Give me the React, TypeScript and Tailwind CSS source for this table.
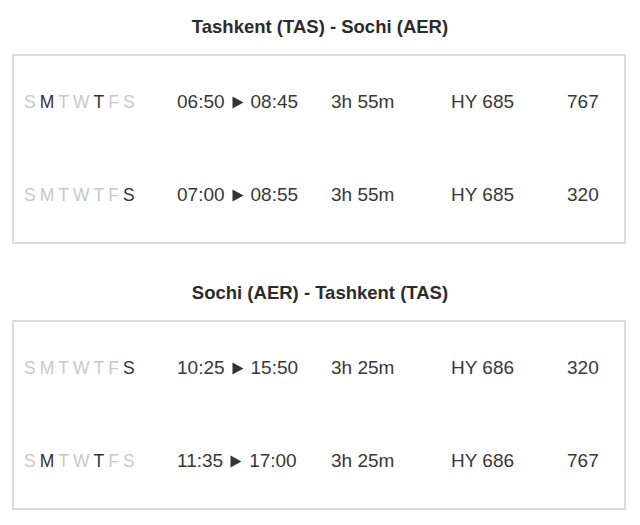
import React from 'react';

type Flight = {
  days: boolean[];
  dep: string;
  arr: string;
  duration: string;
  number: string;
  aircraft: string;
};

type Route = {
  title: string;
  flights: Flight[];
};

const DAY_LETTERS = ['S', 'M', 'T', 'W', 'T', 'F', 'S'];

const routes: Route[] = [
  {
    title: 'Tashkent (TAS) - Sochi (AER)',
    flights: [
      { days: [false, true, false, false, true, false, false], dep: '06:50', arr: '08:45', duration: '3h 55m', number: 'HY 685', aircraft: '767' },
      { days: [false, false, false, false, false, false, true], dep: '07:00', arr: '08:55', duration: '3h 55m', number: 'HY 685', aircraft: '320' },
    ],
  },
  {
    title: 'Sochi (AER) - Tashkent (TAS)',
    flights: [
      { days: [false, false, false, false, false, false, true], dep: '10:25', arr: '15:50', duration: '3h 25m', number: 'HY 686', aircraft: '320' },
      { days: [false, true, false, false, true, false, false], dep: '11:35', arr: '17:00', duration: '3h 25m', number: 'HY 686', aircraft: '767' },
    ],
  },
];

function Arrow() {
  return (
    <svg width="12" height="13" viewBox="0 0 12 13" className="mx-[7px] inline-block">
      <path d="M0.5 0.5 L11.5 6.5 L0.5 12.5 Z" fill="#333333" />
    </svg>
  );
}

function FlightRow({ flight }: { flight: Flight }) {
  return (
    <div className="h-[93px] flex items-center pl-[10px] text-[19px] text-[#383838]">
      {/* Operating days */}
      <div className="w-[153px] flex items-center gap-[4px] text-[17.5px]">
        {DAY_LETTERS.map((letter, i) => (
          <span key={i} className={flight.days[i] ? 'text-[#333333]' : 'text-[#c9c9c9]'}>
            {letter}
          </span>
        ))}
      </div>
      <div className="w-[154px] flex items-center">
        <span>{flight.dep}</span>
        <Arrow />
        <span>{flight.arr}</span>
      </div>
      <div className="w-[120px]">{flight.duration}</div>
      <div className="w-[116px]">{flight.number}</div>
      <div>{flight.aircraft}</div>
    </div>
  );
}

export default function App() {
  return (
    <div className="w-[640px] h-[525px] bg-white px-[12px] font-['Liberation_Sans',Arial,sans-serif]">
      {routes.map((route, idx) => (
        <section key={route.title} className={idx > 0 ? 'mt-[22px]' : ''}>
          <h2 className="h-[54px] flex items-center justify-center text-[18.5px] font-bold text-[#2b2b2b]">
            {route.title}
          </h2>
          <div className="w-[614px] border-2 border-[#dcdcdc]">
            {route.flights.map((f, i) => (
              <FlightRow key={i} flight={f} />
            ))}
          </div>
        </section>
      ))}
    </div>
  );
}
